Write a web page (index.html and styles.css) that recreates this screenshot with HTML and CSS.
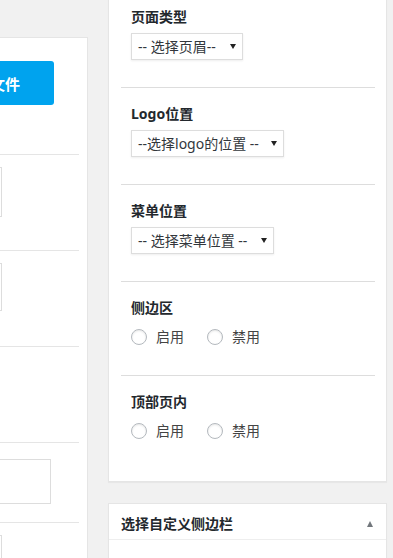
FILE: index.html
```html
<!DOCTYPE html>
<html lang="zh-CN">
<head>
    <meta charset="UTF-8">
    <meta name="viewport" content="width=device-width, initial-scale=1.0">
    <title>页面设置</title>
    <link rel="stylesheet" href="styles.css">
</head>
<body>
    <div class="layout">
        <div class="main-col">
            <div class="upload-box">
                <div class="upload-row first">
                    <button class="upload-btn">上传文件</button>
                </div>
                <div class="upload-row">
                    <div class="thumb tall"></div>
                </div>
                <div class="upload-row">
                    <div class="thumb"></div>
                </div>
                <div class="upload-row"></div>
                <div class="upload-row short">
                    <div class="text-input"></div>
                </div>
                <div class="upload-row">
                    <div class="thumb"></div>
                </div>
            </div>
        </div>

        <div class="side-col">
            <div class="postbox">
                <div class="field">
                    <div class="field-label">页面类型</div>
                    <div class="fake-select w-header"><span>-- 选择页眉--</span><i class="caret"></i></div>
                </div>
                <div class="field">
                    <div class="field-label">Logo位置</div>
                    <div class="fake-select w-logo"><span>--选择logo的位置 --</span><i class="caret"></i></div>
                </div>
                <div class="field">
                    <div class="field-label">菜单位置</div>
                    <div class="fake-select w-menu"><span>-- 选择菜单位置 --</span><i class="caret"></i></div>
                </div>
                <div class="field radio-field">
                    <div class="field-label">侧边区</div>
                    <div class="radio-row">
                        <label class="radio"><span class="dot"></span>启用</label>
                        <label class="radio"><span class="dot"></span>禁用</label>
                    </div>
                </div>
                <div class="field radio-field last">
                    <div class="field-label">顶部页内</div>
                    <div class="radio-row">
                        <label class="radio"><span class="dot"></span>启用</label>
                        <label class="radio"><span class="dot"></span>禁用</label>
                    </div>
                </div>
            </div>

            <div class="postbox sidebar-box">
                <div class="hndle">
                    <span>选择自定义侧边栏</span>
                    <i class="toggle"></i>
                </div>
                <div class="inside"></div>
            </div>
        </div>
    </div>
</body>
</html>
```

FILE: styles.css
```css
body {
    margin: 0;
    background-color: #f1f1f1;
    font-family: "Noto Sans", "Noto Sans CJK SC", sans-serif;
    font-size: 14px;
    color: #32373c;
    overflow: hidden;
}

.layout {
    display: flex;
    align-items: flex-start;
    gap: 20px;
}

/* left column, scrolled partly out of view */
.main-col {
    width: 161px;
    margin-left: -73px;
    margin-top: 37px;
    flex-shrink: 0;
}

.upload-box {
    background: white;
    border: 1px solid #e5e5e5;
    border-bottom: none;
    padding-right: 8px;
}

.upload-row {
    height: 96px;
    border-bottom: 1px solid #e5e5e5;
    padding-top: 12px;
    box-sizing: border-box;
}

.upload-row.first {
    height: 117px;
    padding-top: 23px;
}

.upload-row.short {
    height: 80px;
    padding-top: 16px;
}

.upload-btn {
    display: flex;
    justify-content: flex-end;
    align-items: center;
    width: 126px;
    height: 44px;
    padding: 0 34px 0 0;
    border: none;
    border-radius: 3px;
    background: #00a3ee;
    color: white;
    font-family: inherit;
    font-size: 15px;
    font-weight: bold;
}

.thumb {
    width: 74px;
    height: 48px;
    border: 1px solid #ddd;
    box-sizing: border-box;
}

.thumb.tall {
    height: 50px;
}

.text-input {
    width: 123px;
    height: 45px;
    border: 1px solid #ddd;
    box-sizing: border-box;
}

/* right column */
.side-col {
    width: 279px;
    margin-top: -10px;
    flex-shrink: 0;
}

.postbox {
    background: white;
    border: 1px solid #e5e5e5;
    box-shadow: 0 1px 1px rgba(0,0,0,0.04);
    padding: 0 11px 12px 12px;
}

.field {
    padding: 16px 10px 27px;
    border-bottom: 1px solid #ddd;
}

.field.radio-field {
    padding-bottom: 28px;
}

.field.last {
    border-bottom: none;
}

.field-label {
    font-weight: bold;
    line-height: 20px;
    color: #23282d;
    margin-bottom: 6px;
}

.fake-select {
    display: flex;
    align-items: center;
    justify-content: space-between;
    height: 27px;
    box-sizing: border-box;
    padding: 0 6px 0 6px;
    border: 1px solid #ddd;
    box-shadow: 0 1px 2px rgba(0,0,0,0.07);
    line-height: 25px;
    color: #32373c;
}

.w-header { width: 112px; }
.w-logo { width: 153px; }
.w-menu { width: 143px; }

.caret {
    width: 0;
    height: 0;
    border-left: 3px solid transparent;
    border-right: 3px solid transparent;
    border-top: 5px solid #222;
}

.radio-row {
    display: flex;
    margin-top: 9px;
    line-height: 20px;
}

.radio {
    display: flex;
    align-items: center;
    margin-right: 23px;
    color: #444;
}

.dot {
    width: 16px;
    height: 16px;
    box-sizing: border-box;
    border: 1px solid #b4b9be;
    border-radius: 50%;
    box-shadow: inset 0 1px 2px rgba(0,0,0,0.1);
    margin-right: 9px;
}

.sidebar-box {
    margin-top: 21px;
    padding: 0;
}

.hndle {
    display: flex;
    justify-content: space-between;
    align-items: center;
    padding: 10px 13px 6px 12px;
    line-height: 19px;
    border-bottom: 1px solid #eee;
    font-weight: bold;
    color: #23282d;
}

.toggle {
    width: 0;
    height: 0;
    border-left: 3px solid transparent;
    border-right: 3px solid transparent;
    border-bottom: 6px solid #72777c;
}

.inside {
    height: 60px;
}
```
